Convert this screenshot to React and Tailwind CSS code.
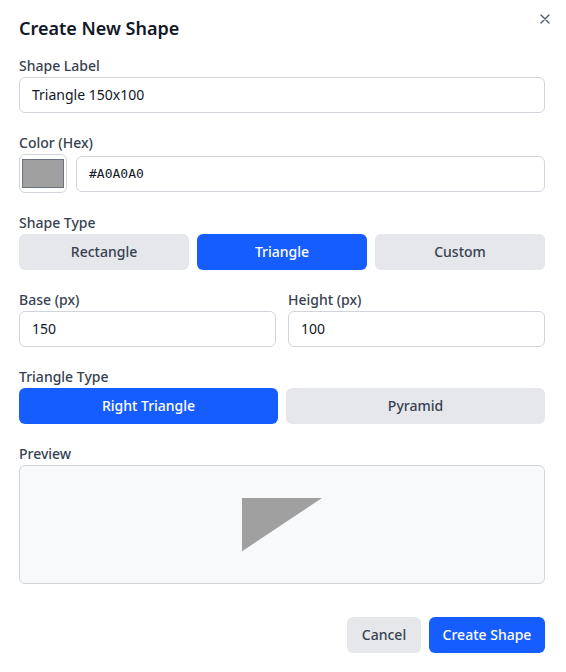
import React from "react";

function Label({ children }) {
  return (
    <div className="h-5 mb-px text-sm leading-5 font-medium text-[#374151]">{children}</div>
  );
}

function Seg({ active, children }) {
  return (
    <button
      className={
        "h-9 flex-1 rounded-md text-sm font-medium " +
        (active ? "bg-[#165DFF] text-white" : "bg-[#e5e7eb] text-[#374151]")
      }
    >
      {children}
    </button>
  );
}

function Field({ value, mono }) {
  return (
    <div
      className={
        "h-9 w-full rounded-md border border-[#d1d5db] bg-white px-3 flex items-center text-[#111827] " +
        (mono ? "font-['DejaVu_Sans_Mono',monospace] text-[13px]" : "text-sm")
      }
    >
      {value}
    </div>
  );
}

export default function App() {
  return (
    <div className="relative w-[566px] h-[672px] bg-white font-['Noto_Sans',sans-serif] pl-[19px] pr-[21px] pt-[14px]">
      <button className="absolute right-[16px] top-[14px] w-[10px] h-[10px]">
        <svg viewBox="0 0 10 10" width="10" height="10" className="block">
          <path d="M1 1L9 9M9 1L1 9" stroke="#4b5563" strokeWidth="1.3" strokeLinecap="round" />
        </svg>
      </button>
      <h2 className="h-7 text-lg leading-7 font-semibold text-[#111827]">Create New Shape</h2>
      <div className="mt-[14px] flex flex-col gap-5">
        <div>
          <Label>Shape Label</Label>
          <Field value="Triangle 150x100" />
        </div>
        <div>
          <Label>Color (Hex)</Label>
          <div className="flex items-center gap-[9px]">
            <div className="w-12 h-[39px] shrink-0 rounded-md border border-[#d1d5db] bg-white px-[2px] py-[4px]">
              <div className="w-full h-full border border-[#6b7280] bg-[#A0A0A0]" />
            </div>
            <Field value="#A0A0A0" mono />
          </div>
        </div>
        <div>
          <Label>Shape Type</Label>
          <div className="flex gap-2">
            <Seg>Rectangle</Seg>
            <Seg active>Triangle</Seg>
            <Seg>Custom</Seg>
          </div>
        </div>
        <div className="flex gap-3">
          <div className="flex-1">
            <Label>Base (px)</Label>
            <Field value="150" />
          </div>
          <div className="flex-1">
            <Label>Height (px)</Label>
            <Field value="100" />
          </div>
        </div>
        <div>
          <Label>Triangle Type</Label>
          <div className="flex gap-2">
            <Seg active>Right Triangle</Seg>
            <Seg>Pyramid</Seg>
          </div>
        </div>
        <div>
          <Label>Preview</Label>
          <div className="h-[119px] rounded-md border border-[#d1d5db] bg-[#f8f9fb] flex items-center justify-center">
            <svg width="80" height="53.33" viewBox="0 0 80 53.33" className="block">
              <polygon points="0,0 80,0 0,53.33" fill="#A0A0A0" />
            </svg>
          </div>
        </div>
      </div>
      <div className="mt-[33px] flex justify-end gap-2">
        <button className="h-9 w-[74px] rounded-md bg-[#e5e7eb] text-sm font-medium text-[#374151]">Cancel</button>
        <button className="h-9 w-[116px] rounded-md bg-[#165DFF] text-sm font-medium text-white">Create Shape</button>
      </div>
    </div>
  );
}
